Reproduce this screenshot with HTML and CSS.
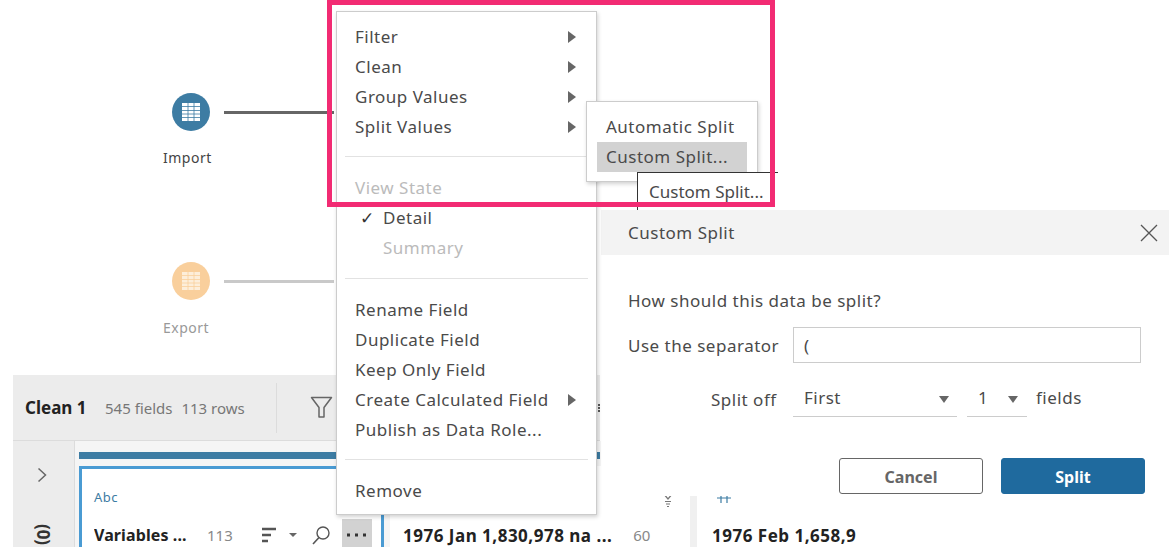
FILE: index.html
```html
<!DOCTYPE html>
<html lang="en">
<head>
    <meta charset="UTF-8">
    <title>Custom Split</title>
    <link rel="stylesheet" href="styles.css">
</head>
<body>
    <div class="page">
        <div class="flow">
            <div class="node">
                <div class="node-top">
                    <span class="circle circle-blue">
                        <svg width="18" height="18" viewBox="0 0 18 18"><rect width="18" height="18" fill="#fff"/><path d="M0 3.500h18M0 7.500h18M0 11h18M0 14.500h18M6 0v18M12 0v18" stroke="#3d7ca3" stroke-width=".8"/></svg>
                    </span>
                    <span class="link link-dark"></span>
                </div>
                <div class="node-label">Import</div>
            </div>
            <div class="node node-off">
                <div class="node-top">
                    <span class="circle circle-orange">
                        <svg width="18" height="18" viewBox="0 0 18 18"><rect width="18" height="18" fill="#fdeeda"/><path d="M0 3.500h18M0 7.500h18M0 11h18M0 14.500h18M6 0v18M12 0v18" stroke="#f9cf9c" stroke-width=".8"/></svg>
                    </span>
                    <span class="link link-light"></span>
                </div>
                <div class="node-label">Export</div>
            </div>
        </div>

        <div class="panel">
            <div class="panel-head">
                <span class="panel-title">Clean 1</span>
                <span class="panel-counts">
                    <span>545 fields</span>
                    <span>113 rows</span>
                </span>
                <span class="panel-sep"></span>
                <svg class="filter-icon" width="23" height="23" viewBox="0 0 23 23"><path d="M1.500 1.500h20l-7.500 10v9.500h-5v-9.500z" fill="none" stroke="#666" stroke-width="1.500" stroke-linejoin="round"/></svg>
                <span class="panel-tick"></span>
            </div>
            <div class="panel-body">
                <div class="rail">
                    <svg class="rail-chevron" width="12" height="16" viewBox="0 0 12 16"><path d="M2.500 1.500l7 6.500-7 6.500" fill="none" stroke="#666" stroke-width="1.500"/></svg>
                    <span class="rail-count">(0)</span>
                </div>
                <div class="profile">
                    <div class="profile-bar"></div>
                    <div class="cards">
                        <div class="card card-selected">
                            <div class="card-type">Abc</div>
                            <div class="card-row">
                                <span class="card-name">Variables ...</span>
                                <span class="card-num">113</span>
                                <svg class="sort-icon" width="16" height="16" viewBox="0 0 16 16"><path d="M1 2h14M1 8h9M1 14h6" stroke="#555" stroke-width="2.500"/></svg>
                                <span class="caret-small"></span>
                                <svg class="search-icon" width="20" height="20" viewBox="0 0 20 20"><circle cx="12" cy="8" r="6" fill="none" stroke="#555" stroke-width="1.400"/><path d="M8 12.500l-6 6.500" stroke="#555" stroke-width="1.600"/></svg>
                                <span class="more-btn">
                                    <svg width="20" height="4" viewBox="0 0 20 4"><path d="M0 .500h3v3H0zM8 .500h3v3H8zM16 .500h3v3h-3z" fill="#333"/></svg>
                                </span>
                            </div>
                        </div>
                        <div class="card card-next">
                            <svg class="funnel-mini" width="12" height="16" viewBox="0 0 12 16"><path d="M1 1l5 6 5-6M3 9.500h6M4 12h4M5 14.500h2" fill="none" stroke="#777" stroke-width="1.200"/></svg>
                            <div class="card-row">
                                <span class="card-name">1976 Jan 1,830,978 na ...</span>
                                <span class="card-num">60</span>
                            </div>
                        </div>
                        <div class="card card-last">
                            <svg class="hash-icon" width="14" height="14" viewBox="0 0 14 14"><path d="M4 0v14M10 0v14M0 4.500h14M0 9h14" fill="none" stroke="#3d7ca3" stroke-width="1.200"/></svg>
                            <div class="card-row">
                                <span class="card-name">1976 Feb 1,658,9</span>
                            </div>
                        </div>
                    </div>
                </div>
            </div>
        </div>

        <div class="dialog">
            <div class="dialog-head">
                <span>Custom Split</span>
                <svg width="20" height="20" viewBox="0 0 20 20"><path d="M2 2l16 16M18 2L2 18" stroke="#555" stroke-width="1.300"/></svg>
            </div>
            <div class="dialog-body">
                <p class="question">How should this data be split?</p>
                <div class="sep-row">
                    <span class="sep-label">Use the separator</span>
                    <span class="sep-input">(</span>
                </div>
                <div class="split-row">
                    <span class="split-label">Split off</span>
                    <span class="select select-wide">First<i class="caret"></i></span>
                    <span class="select select-narrow">1<i class="caret"></i></span>
                    <span class="split-unit">fields</span>
                </div>
                <div class="dialog-actions">
                    <button class="btn btn-cancel">Cancel</button>
                    <button class="btn btn-split">Split</button>
                </div>
            </div>
        </div>

        <div class="menu">
            <div class="menu-item">Filter<i class="arrow"></i></div>
            <div class="menu-item">Clean<i class="arrow"></i></div>
            <div class="menu-item">Group Values<i class="arrow"></i></div>
            <div class="menu-item">Split Values<i class="arrow"></i></div>
            <hr class="menu-line">
            <div class="menu-item menu-off menu-state">View State</div>
            <div class="menu-item menu-sub"><span class="check">✓</span>Detail</div>
            <div class="menu-item menu-sub menu-off">Summary</div>
            <hr class="menu-line menu-line-low">
            <div class="menu-item menu-first">Rename Field</div>
            <div class="menu-item">Duplicate Field</div>
            <div class="menu-item">Keep Only Field</div>
            <div class="menu-item">Create Calculated Field<i class="arrow"></i></div>
            <div class="menu-item">Publish as Data Role...</div>
            <hr class="menu-line">
            <div class="menu-item menu-first">Remove</div>
        </div>

        <div class="submenu">
            <div class="submenu-item">Automatic Split</div>
            <div class="submenu-item submenu-active">Custom Split...</div>
        </div>

        <div class="tooltip">Custom Split...</div>
        <div class="highlight"></div>
    </div>
</body>
</html>
```

FILE: styles.css
```css
* {
    box-sizing: border-box;
}
body {
    margin: 0;
    background: #fff;
    font-family: 'Noto Sans', sans-serif;
    font-size: 17px;
    letter-spacing: 0.5px;
    color: #4a4a4a;
}
.page {
    position: relative;
    width: 1176px;
    height: 547px;
    overflow: hidden;
}

/* flow canvas */
.flow {
    height: 375px;
    padding: 93px 0 0 172px;
}
.node {
    height: 169px;
}
.node-top {
    display: flex;
    align-items: center;
    gap: 14px;
}
.circle {
    width: 38px;
    height: 38px;
    border-radius: 50%;
    display: flex;
    align-items: center;
    justify-content: center;
}
.circle-blue { background: #3d7ca3; }
.circle-orange { background: #f9cf9c; }
.link {
    width: 110px;
    height: 3px;
}
.link-dark { background: #666; }
.link-light { background: #c9c9c9; }
.node-label {
    margin: 17px 0 0 -9px;
    font-size: 14px;
    line-height: 20px;
    color: #444;
}
.node-off .node-label {
    margin-top: 18px;
    color: #999;
}

/* profile panel */
.panel {
    margin-left: 13px;
    height: 172px;
}
.panel-head {
    width: 587px;
    height: 66px;
    display: flex;
    align-items: center;
    background: #ececec;
    border-bottom: 1px solid #dcdcdc;
    padding-left: 12px;
}
.panel-title {
    width: 80px;
    font-weight: 700;
    font-size: 17px;
    letter-spacing: 0;
    color: #222;
}
.panel-counts {
    width: 171px;
    display: flex;
    gap: 9px;
    font-size: 15px;
    letter-spacing: 0;
    color: #777;
}
.panel-sep {
    width: 1px;
    height: 50px;
    background: #dcdcdc;
    margin-right: 33px;
}
.panel-tick {
    margin-left: auto;
    height: 8px;
    border-left: 2px dotted #555;
}
.panel-body {
    display: flex;
    height: 106px;
}
.rail {
    width: 62px;
    background: #ececec;
    border-right: 1px solid #dcdcdc;
    display: flex;
    flex-direction: column;
    align-items: center;
    padding-top: 26px;
    gap: 40px;
}
.rail-chevron {
    margin-right: 3px;
}
.rail-count {
    transform: rotate(90deg);
    font-weight: 700;
    font-size: 17px;
    letter-spacing: 0;
    color: #333;
}
.profile {
    flex: 1;
    background: #f5f5f5;
    padding: 11px 0 0 4px;
    overflow: hidden;
}
.profile-bar {
    width: 521px;
    height: 7px;
    background: #3d7ca3;
}
.cards {
    display: flex;
    margin-top: 7px;
}
.card {
    height: 90px;
    background: #fff;
    padding: 20px 0 0 15px;
}
.card-selected {
    width: 305px;
    border: 3px solid #4a9bd3;
    border-bottom: 0;
    padding-left: 12px;
    flex: none;
}
.card-next {
    position: relative;
    width: 307px;
    margin-left: 6px;
    padding-left: 13px;
    padding-top: 57px;
    border-right: 7px solid #f0f0f0;
    flex: none;
}
.card-last {
    flex: 1;
    padding-left: 15px;
    padding-top: 23px;
}
.card-type {
    color: #3d7ca3;
    font-size: 13px;
    line-height: 16px;
}
.hash-icon {
    display: block;
    margin-left: 5px;
}
.card-row {
    display: flex;
    align-items: center;
    height: 24px;
    margin-top: 18px;
}
.card-next .card-row {
    margin-top: 0;
}
.card-last .card-row {
    margin-top: 20px;
}
.card-name {
    font-weight: 700;
    font-size: 17px;
    color: #222;
    white-space: nowrap;
}
.card-selected .card-name {
    width: 113px;
    font-size: 16px;
    letter-spacing: 0.1px;
    overflow: hidden;
}
.card-num {
    font-size: 15px;
    letter-spacing: 0;
    color: #888;
}
.card-selected .card-num {
    width: 54px;
}
.card-next .card-num {
    margin-left: 21px;
}
.caret-small {
    width: 0;
    height: 0;
    margin-left: 12px;
    border-left: 4px solid transparent;
    border-right: 4px solid transparent;
    border-top: 4px solid #666;
}
.search-icon {
    margin-left: 14px;
}
.more-btn {
    width: 30px;
    height: 28px;
    margin-left: 11px;
    margin-top: -4px;
    padding-top: 4px;
    background: #d2d2d2;
    display: flex;
    justify-content: center;
    align-items: center;
    align-self: flex-start;
}
.funnel-mini {
    position: absolute;
    left: 272px;
    top: 26px;
}

/* dialog */
.dialog {
    position: absolute;
    left: 601px;
    top: 210px;
    width: 575px;
    height: 286px;
    background: #fff;
}
.dialog-head {
    width: 568px;
    height: 45px;
    background: #f3f3f3;
    display: flex;
    align-items: center;
    justify-content: space-between;
    padding: 0 10px 0 27px;
}
.dialog-body {
    padding: 34px 31px 0 27px;
}
.question {
    margin: 0;
    line-height: 24px;
}
.sep-row {
    display: flex;
    align-items: center;
    margin-top: 14px;
}
.sep-label {
    width: 165px;
    padding-top: 1px;
}
.sep-input {
    width: 348px;
    height: 36px;
    border: 1px solid #ccc;
    padding-left: 10px;
    line-height: 36px;
}
.split-row {
    display: flex;
    align-items: center;
    margin-top: 18px;
    height: 36px;
}
.split-label {
    width: 82px;
    margin-left: 83px;
    padding-top: 1px;
}
.select {
    height: 36px;
    padding-left: 11px;
    padding-bottom: 3px;
    border-bottom: 1px solid #ccc;
    display: flex;
    align-items: center;
    justify-content: space-between;
}
.select-wide {
    width: 164px;
    margin-right: 10px;
    padding-right: 8px;
}
.select-narrow {
    width: 60px;
    margin-right: 9px;
    padding-right: 9px;
}
.split-unit {
    padding-bottom: 3px;
}
.caret {
    width: 0;
    height: 0;
    margin-top: 5px;
    border-left: 5.5px solid transparent;
    border-right: 5.5px solid transparent;
    border-top: 7px solid #666;
}
.dialog-actions {
    display: flex;
    justify-content: flex-end;
    gap: 18px;
    margin-top: 41px;
}
.btn {
    width: 144px;
    height: 36px;
    padding: 2px 0 0 0;
    border-radius: 3px;
    font-family: inherit;
    font-size: 16px;
    font-weight: 700;
}
.btn-cancel {
    background: #fff;
    border: 1px solid #666;
    color: #666;
}
.btn-split {
    background: #1f6a9e;
    border: 1px solid #1f6a9e;
    color: #fff;
}

/* context menu */
.menu {
    position: absolute;
    left: 336px;
    top: 11px;
    width: 261px;
    height: 504px;
    background: #fff;
    border: 1px solid #ccc;
    box-shadow: 1px 2px 4px rgba(0,0,0,0.18);
    padding: 10px 8px 0 8px;
}
.menu-item {
    height: 30px;
    line-height: 30px;
    padding-left: 10px;
    position: relative;
    white-space: nowrap;
}
.arrow {
    position: absolute;
    left: 223px;
    top: 9px;
    width: 0;
    height: 0;
    border-top: 6px solid transparent;
    border-bottom: 6px solid transparent;
    border-left: 8px solid #666;
}
.menu-line {
    height: 1px;
    margin: 14px 0 0 0;
    border: 0;
    background: #e2e2e2;
}
.menu-line-low {
    margin-top: 15px;
}
.menu-state {
    margin-top: 16px;
}
.menu-off {
    color: #bbb;
}
.menu-sub {
    padding-left: 38px;
}
.menu-first {
    margin-top: 16px;
}
.check {
    position: absolute;
    left: 15px;
    color: #333;
    font-family: 'DejaVu Sans', sans-serif;
    font-weight: 700;
}

.submenu {
    position: absolute;
    left: 586px;
    top: 101px;
    width: 172px;
    height: 81px;
    background: #fff;
    border: 1px solid #ccc;
    box-shadow: 1px 2px 4px rgba(0,0,0,0.18);
    padding: 10px 10px 0 10px;
}
.submenu-item {
    height: 30px;
    line-height: 30px;
    padding-left: 9px;
}
.submenu-active {
    background: #d2d2d2;
}
.tooltip {
    position: absolute;
    left: 637px;
    top: 172px;
    width: 141px;
    height: 38px;
    background: #fff;
    border-top: 1px solid #333;
    border-left: 1px solid #333;
    padding: 6px 0 0 11px;
    line-height: 26px;
    letter-spacing: 0;
}
.highlight {
    position: absolute;
    left: 327px;
    top: 0;
    width: 448px;
    height: 207px;
    border: 5px solid #f22b73;
}
```
